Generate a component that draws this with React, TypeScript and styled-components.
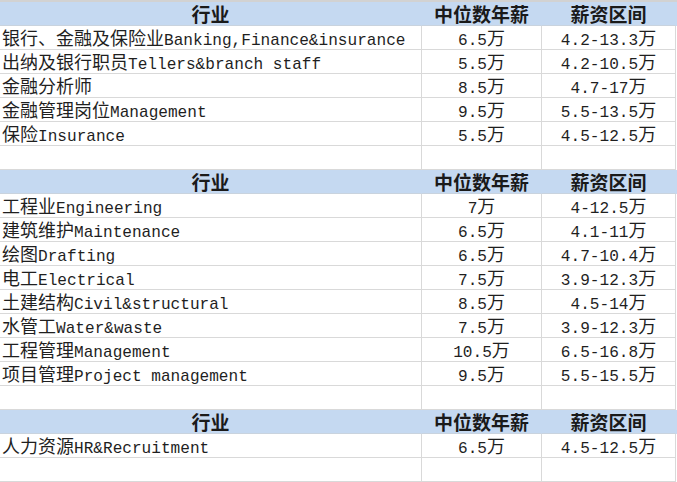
import { Fragment } from "react";
import styled, { createGlobalStyle } from "styled-components";

const GlobalStyle = createGlobalStyle`
  html, body {
    margin: 0;
    padding: 0;
    background: #fff;
    overflow: hidden;
  }
`;

const Sheet = styled.div`
  width: 677px;
  height: 482px;
  overflow: hidden;
  box-sizing: border-box;
  border-top: 2px solid #d2d2d2;
  color: #1f1f1f;
`;

const Row = styled.div<{ $head?: boolean }>`
  display: grid;
  grid-template-columns: 422px 120px 134px;
  height: 24px;
  background: ${(p) => (p.$head ? "#c5d9f1" : "#fff")};
`;

const Cell = styled.div<{ $center?: boolean; $head?: boolean }>`
  display: flex;
  align-items: center;
  justify-content: ${(p) => (p.$center ? "center" : "flex-start")};
  padding-left: ${(p) => (p.$center ? "0" : "2px")};
  box-sizing: border-box;
  height: 24px;
  white-space: pre;
  border-bottom: 1px solid ${(p) => (p.$head ? "#c9d3de" : "#d9d9d9")};
  border-right: 1px solid ${(p) => (p.$head ? "transparent" : "#d9d9d9")};
`;

const HeadText = styled.span`
  display: inline-block;
  height: 23px;
  font-family: "Noto Sans CJK SC", sans-serif;
  font-weight: 700;
  font-size: 19px;
  line-height: 23px;
  color: #1a1a1a;
`;

const Line = styled.span`
  display: inline-block;
  line-height: 23px;
  height: 23px;
`;

const Cjk = styled.span`
  font-family: "Noto Sans CJK SC", sans-serif;
  font-size: 18px;
`;

const Latin = styled.span`
  font-family: "Liberation Mono", monospace;
  font-size: 16.1px;
`;

// SimSun-like mix: full-width CJK, half-width latin
function Mixed({ text }: { text: string }) {
  const parts = text.split(/([\u3000-\u9fff\uff00-\uffef]+)/).filter(Boolean);
  return (
    <Line>
      {parts.map((p, i) =>
        /[\u3000-\u9fff\uff00-\uffef]/.test(p) ? (
          <Cjk key={i}>{p}</Cjk>
        ) : (
          <Latin key={i}>{p}</Latin>
        )
      )}
    </Line>
  );
}

type Item = [string, string, string];

const sections: Item[][] = [
  [
    ["银行、金融及保险业Banking,Finance&insurance", "6.5万", "4.2-13.3万"],
    ["出纳及银行职员Tellers&branch staff", "5.5万", "4.2-10.5万"],
    ["金融分析师", "8.5万", "4.7-17万"],
    ["金融管理岗位Management", "9.5万", "5.5-13.5万"],
    ["保险Insurance", "5.5万", "4.5-12.5万"],
  ],
  [
    ["工程业Engineering", "7万", "4-12.5万"],
    ["建筑维护Maintenance", "6.5万", "4.1-11万"],
    ["绘图Drafting", "6.5万", "4.7-10.4万"],
    ["电工Electrical", "7.5万", "3.9-12.3万"],
    ["土建结构Civil&structural", "8.5万", "4.5-14万"],
    ["水管工Water&waste", "7.5万", "3.9-12.3万"],
    ["工程管理Management", "10.5万", "6.5-16.8万"],
    ["项目管理Project management", "9.5万", "5.5-15.5万"],
  ],
  [["人力资源HR&Recruitment", "6.5万", "4.5-12.5万"]],
];

function HeaderRow({ empty }: { empty?: boolean }) {
  return (
    <Row $head>
      <Cell $head $center>
        {!empty && <HeadText>行业</HeadText>}
      </Cell>
      <Cell $head $center>
        {!empty && <HeadText>中位数年薪</HeadText>}
      </Cell>
      <Cell $head $center>
        {!empty && <HeadText>薪资区间</HeadText>}
      </Cell>
    </Row>
  );
}

function SalaryTable() {
  return (
    <Sheet>
      {sections.map((rows, s) => (
        <Fragment key={s}>
          <HeaderRow />
          {rows.map(([name, median, range]) => (
            <Row key={name}>
              <Cell>
                <Mixed text={name} />
              </Cell>
              <Cell $center>
                <Mixed text={median} />
              </Cell>
              <Cell $center>
                <Mixed text={range} />
              </Cell>
            </Row>
          ))}
          <Row>
            <Cell />
            <Cell />
            <Cell />
          </Row>
        </Fragment>
      ))}
      <HeaderRow empty />
    </Sheet>
  );
}

export default function App() {
  return (
    <>
      <GlobalStyle />
      <SalaryTable />
    </>
  );
}
